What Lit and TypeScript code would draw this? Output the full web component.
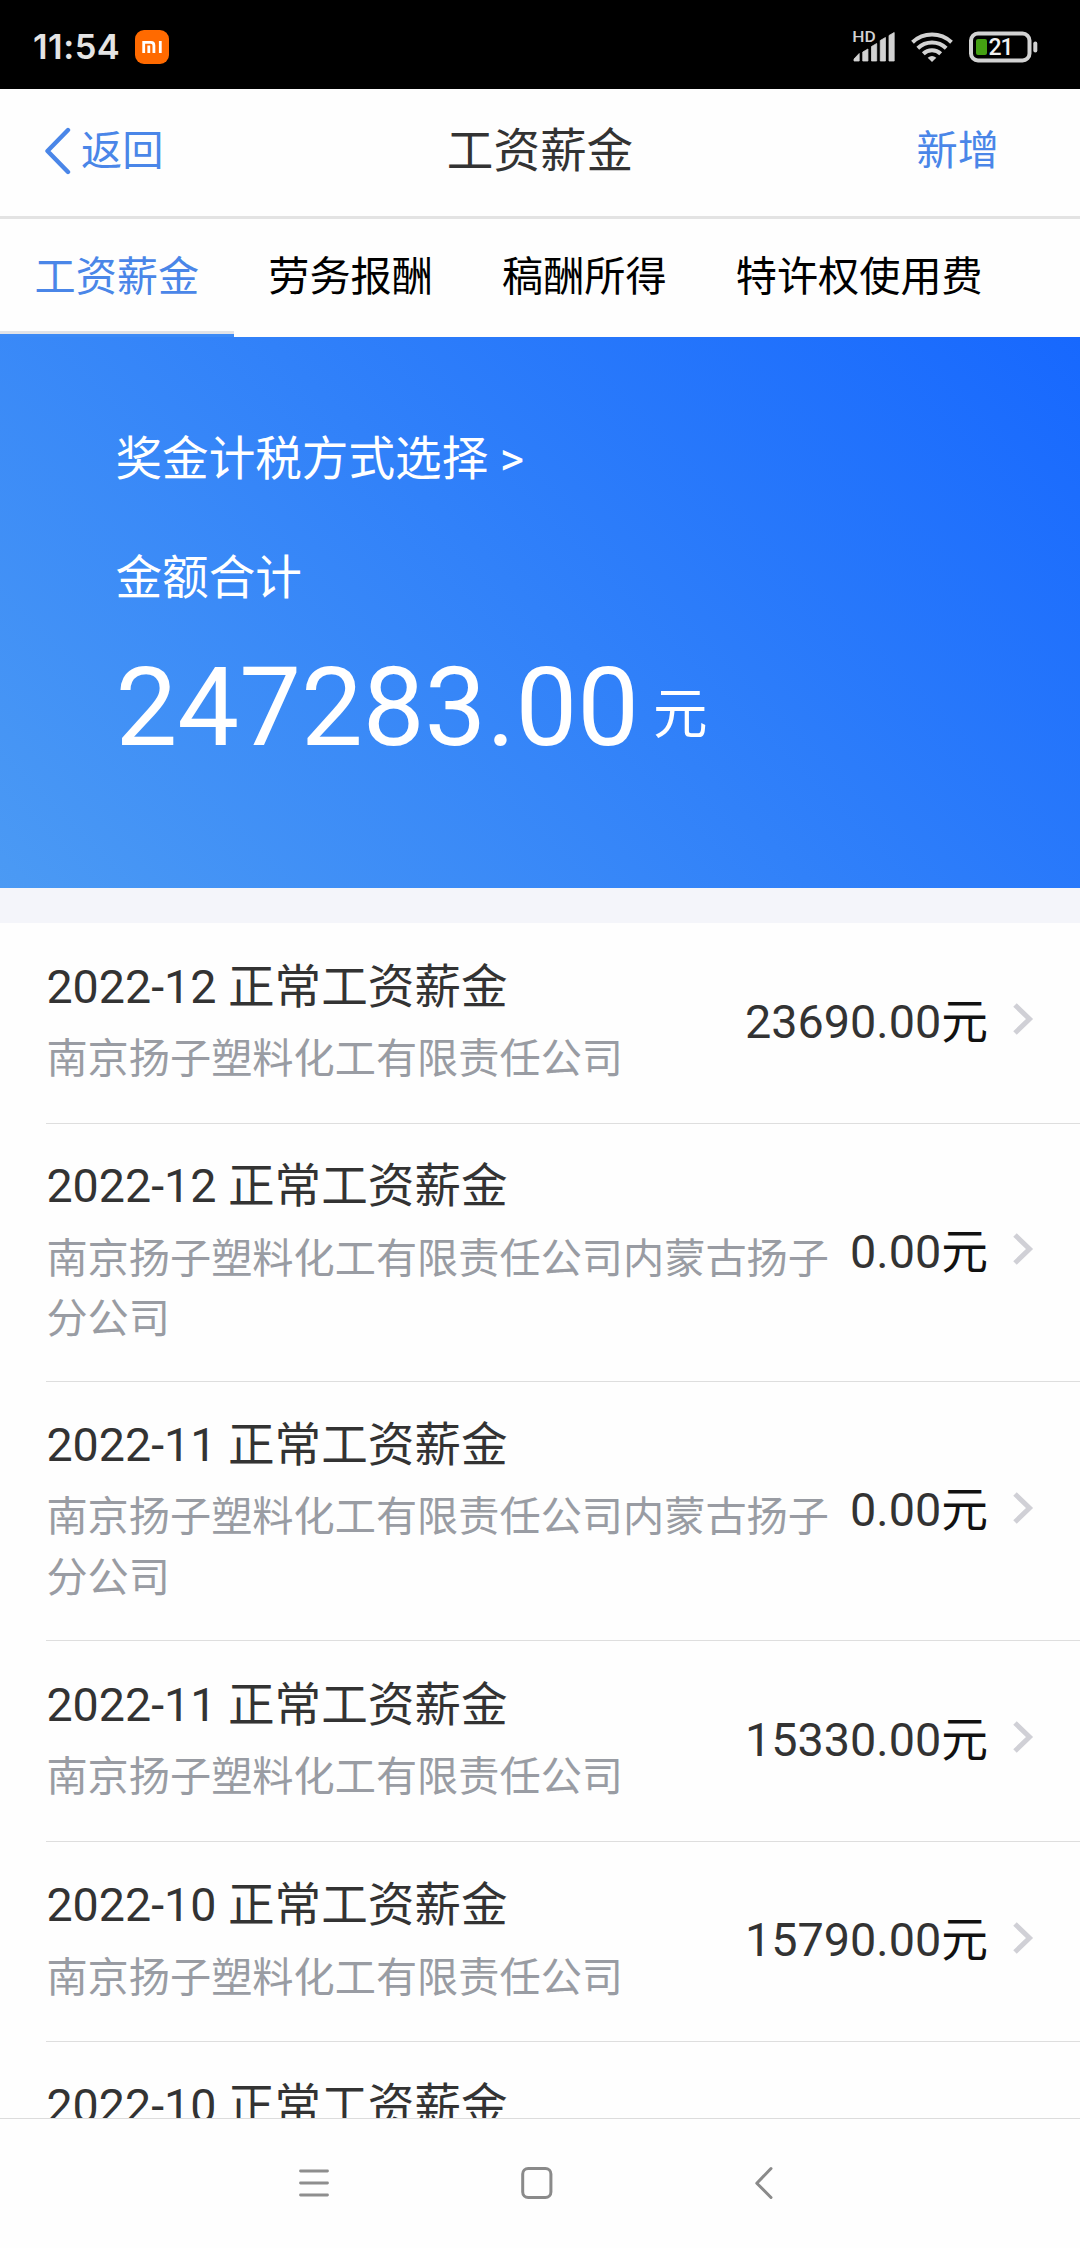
import { LitElement, html, css, svg } from "lit";
import { customElement, property } from "lit/decorators.js";
import { classMap } from "lit/directives/class-map.js";

interface Income {
  month: string;
  kind: string;
  company: string;
  amount: string;
}

const COMPANY = "南京扬子塑料化工有限责任公司";
const BRANCH = "南京扬子塑料化工有限责任公司内蒙古扬子分公司";
const KIND = "正常工资薪金";

const INCOMES: Income[] = [
  { month: "2022-12", kind: KIND, company: COMPANY, amount: "23690.00" },
  { month: "2022-12", kind: KIND, company: BRANCH, amount: "0.00" },
  { month: "2022-11", kind: KIND, company: BRANCH, amount: "0.00" },
  { month: "2022-11", kind: KIND, company: COMPANY, amount: "15330.00" },
  { month: "2022-10", kind: KIND, company: COMPANY, amount: "15790.00" },
  { month: "2022-10", kind: KIND, company: "", amount: "" },
];

@customElement("status-bar")
class StatusBar extends LitElement {
  static styles = css`
    :host {
      display: flex;
      align-items: center;
      justify-content: space-between;
      height: 89px;
      padding: 5px 42px 0 33px;
      box-sizing: border-box;
      background: #000;
      color: #e4e4e4;
      flex: none;
    }
    svg { display: block; flex: none; }
    .left { display: flex; align-items: center; gap: 16px; }
    .time {
      font: 600 34.5px/40px Inter, sans-serif;
      letter-spacing: 0.5px;
      width: 86px;
      white-space: nowrap;
    }
    .right { display: flex; align-items: center; }
    .hd { font: 500 15.5px Roboto, sans-serif; fill: #d2d2d2; }
    .wifi { margin-left: 15px; }
    .battery { margin-left: 16px; }
    .level { font: 500 23px Roboto, sans-serif; fill: #f2f2f2; }
  `;

  render() {
    const tops = [22.5, 18, 12.5, 6.5, 1.5];
    return html`
      <div class="left">
        <span class="time">11:54</span>
        <svg width="34" height="34" viewBox="0 0 34 34">
          <rect width="34" height="34" rx="9" fill="#ff6a00" />
          <path
            d="M8.7 23V12.4h7.2q3 0 3 3V23M13.8 15.6V23M25.3 11V23"
            fill="none" stroke="#fff" stroke-width="2.8" />
        </svg>
      </div>
      <div class="right">
        <svg width="44" height="48" viewBox="-1 -8 44 48">
          <text class="hd" x="-0.8" y="10.6" textLength="23.5" lengthAdjust="spacingAndGlyphs">HD</text>
          ${tops.map((top, i) => {
            const x = 1 + i * 8.75;
            const left = i === 0 ? 28 : top + 3;
            return svg`<path d="M${x} ${left}L${x + 5.2} ${top}V30H${x}Z"
              fill="#d2d2d2" stroke="#d2d2d2" stroke-width=".8" stroke-linejoin="round" />`;
          })}
        </svg>
        <svg class="wifi" width="42" height="32" viewBox="0 0 42 32">
          <g fill="none" stroke="#d2d2d2" stroke-width="4">
            <path d="M1.5 11.3a28.5 28.5 0 0 1 39 0" />
            <path d="M6.8 17.3a20.5 20.5 0 0 1 28.4 0" />
            <path d="M12.3 22.8a12.5 12.5 0 0 1 17.4 0" />
          </g>
          <path d="M21 31l-4.3-4.2q4.3-3.4 8.6 0z" fill="#d2d2d2" />
        </svg>
        <svg class="battery" width="69" height="32" viewBox="0 0 69 32">
          <rect x="2" y="2.5" width="58.5" height="27" rx="7" fill="none" stroke="#d2d2d2" stroke-width="4" />
          <rect x="7" y="8" width="11" height="16" rx="2" fill="#44a013" />
          <rect x="64.3" y="10.5" width="4" height="11" rx="2" fill="#d2d2d2" />
          <text class="level" x="19.5" y="24.3" textLength="25">21</text>
        </svg>
      </div>
    `;
  }
}

@customElement("income-row")
class IncomeRow extends LitElement {
  @property({ attribute: false }) item!: Income;

  static styles = css`
    :host {
      display: flex;
      align-items: center;
      min-height: 200.75px;
      margin-left: 46.4px;
      padding: 33.5px 46px 31.5px 0;
      box-sizing: border-box;
      border-bottom: 1px solid #dedede;
    }
    .info { flex: 1; min-width: 0; }
    .title { font-size: 46.6px; line-height: 58px; color: #333; }
    .company {
      min-height: 60.5px;
      margin-top: 13.5px;
      font-size: 41.2px;
      line-height: 60.5px;
      color: #999ca3;
    }
    .amount {
      flex: none;
      margin: 0 24px 4px 8px;
      font-size: 46.75px;
      line-height: 60px;
      color: #333;
    }
    .unit { color: #111; }
    .arrow { flex: none; display: block; margin-bottom: 9px; }
  `;

  render() {
    const { month, kind, company, amount } = this.item;
    return html`
      <div class="info">
        <div class="title">${month} ${kind}</div>
        <div class="company">${company}</div>
      </div>
      ${amount
        ? html`<div class="amount">${amount}<span class="unit">元</span></div>
            <svg class="arrow" width="22" height="34" viewBox="0 0 22 34">
              <path d="M3 3l14.5 14L3 31" fill="none" stroke="#d0d0d6" stroke-width="5" />
            </svg>`
        : null}
    `;
  }
}

@customElement("app-root")
class AppRoot extends LitElement {
  static styles = css`
    :host {
      display: flex;
      flex-direction: column;
      width: 1080px;
      height: 2248px;
      overflow: hidden;
      background: #fefefe;
      font-family: Roboto, "Noto Sans CJK SC", sans-serif;
    }
    svg { display: block; flex: none; }
    .header {
      flex: none;
      display: grid;
      grid-template-columns: 1fr auto 1fr;
      align-items: center;
      height: 130px;
      padding: 0 81px 4px 44px;
      box-sizing: border-box;
      border-bottom: 3px solid #e3e3e3;
    }
    .back, .add { color: #4a86e8; font-size: 41.25px; line-height: 60px; }
    .back { display: flex; align-items: center; gap: 9px; }
    .add { text-align: right; }
    .heading { font-size: 46.6px; line-height: 60px; color: #333; padding-left: 37px; }
    .tabs { flex: none; display: flex; height: 118px; }
    .tab {
      box-sizing: border-box;
      padding: 28px 34.6px 0;
      font-size: 41.15px;
      line-height: 60px;
      white-space: nowrap;
      color: #000;
    }
    .tab.active {
      color: #4a86e8;
      border-bottom: 3px solid #3c8af6;
      box-shadow: inset 0 -3px #e1e3e8;
    }
    .hero {
      flex: none;
      height: 551px;
      box-sizing: border-box;
      padding: 92px 115.5px 0;
      color: #fff;
      font-size: 46.6px;
      line-height: 60px;
      background: linear-gradient(45deg, #4b9af4, #1768fe);
    }
    .label { margin-top: 59px; }
    .total { display: flex; align-items: baseline; margin-top: 35px; line-height: 130px; }
    .sum { font-size: 110px; }
    .yuan { font-size: 54.5px; margin-left: 14px; position: relative; top: -12px; }
    .list { flex: 1; min-height: 0; overflow: hidden; border-top: 35px solid #f4f5fa; }
    .nav {
      flex: none;
      display: flex;
      justify-content: center;
      align-items: center;
      gap: 192px;
      height: 130px;
      box-sizing: border-box;
      border-top: 1px solid #dcdcdc;
      padding: 0 6px 2px 0;
    }
  `;

  render() {
    const tabs = ["工资薪金", "劳务报酬", "稿酬所得", "特许权使用费"];
    return html`
      <status-bar></status-bar>
      <div class="header">
        <div class="back">
          <svg width="28" height="48" viewBox="0 0 28 48">
            <path d="M24 3L3.5 24L24 45" fill="none" stroke="#4a86e8" stroke-width="4.4"
              stroke-linecap="round" stroke-linejoin="round" />
          </svg>
          <span>返回</span>
        </div>
        <div class="heading">工资薪金</div>
        <div class="add">新增</div>
      </div>
      <div class="tabs">
        ${tabs.map((t, i) => html`<div class=${classMap({ tab: true, active: i === 0 })}>${t}</div>`)}
      </div>
      <div class="hero">
        <div>奖金计税方式选择 &gt;</div>
        <div class="label">金额合计</div>
        <div class="total"><span class="sum">247283.00</span><span class="yuan">元</span></div>
      </div>
      <div class="list">
        ${INCOMES.map((item) => html`<income-row .item=${item}></income-row>`)}
      </div>
      <div class="nav">
        <svg width="30" height="34" viewBox="0 0 30 34">
          <path d="M1.5 5H28.5M1.5 17H28.5M1.5 29H28.5" stroke="#8e8e8e" stroke-width="2.8" stroke-linecap="round" />
        </svg>
        <svg width="32" height="34" viewBox="0 0 32 34">
          <rect x="1.7" y="2.5" width="28.2" height="29" rx="5.5" fill="none" stroke="#8a8a8a" stroke-width="3" />
        </svg>
        <svg width="30" height="34" viewBox="0 0 30 34">
          <path d="M26 2.5L11.8 17.2L26 31.5" fill="none" stroke="#8a8a8a" stroke-width="3"
            stroke-linecap="round" stroke-linejoin="round" />
        </svg>
      </div>
    `;
  }
}
